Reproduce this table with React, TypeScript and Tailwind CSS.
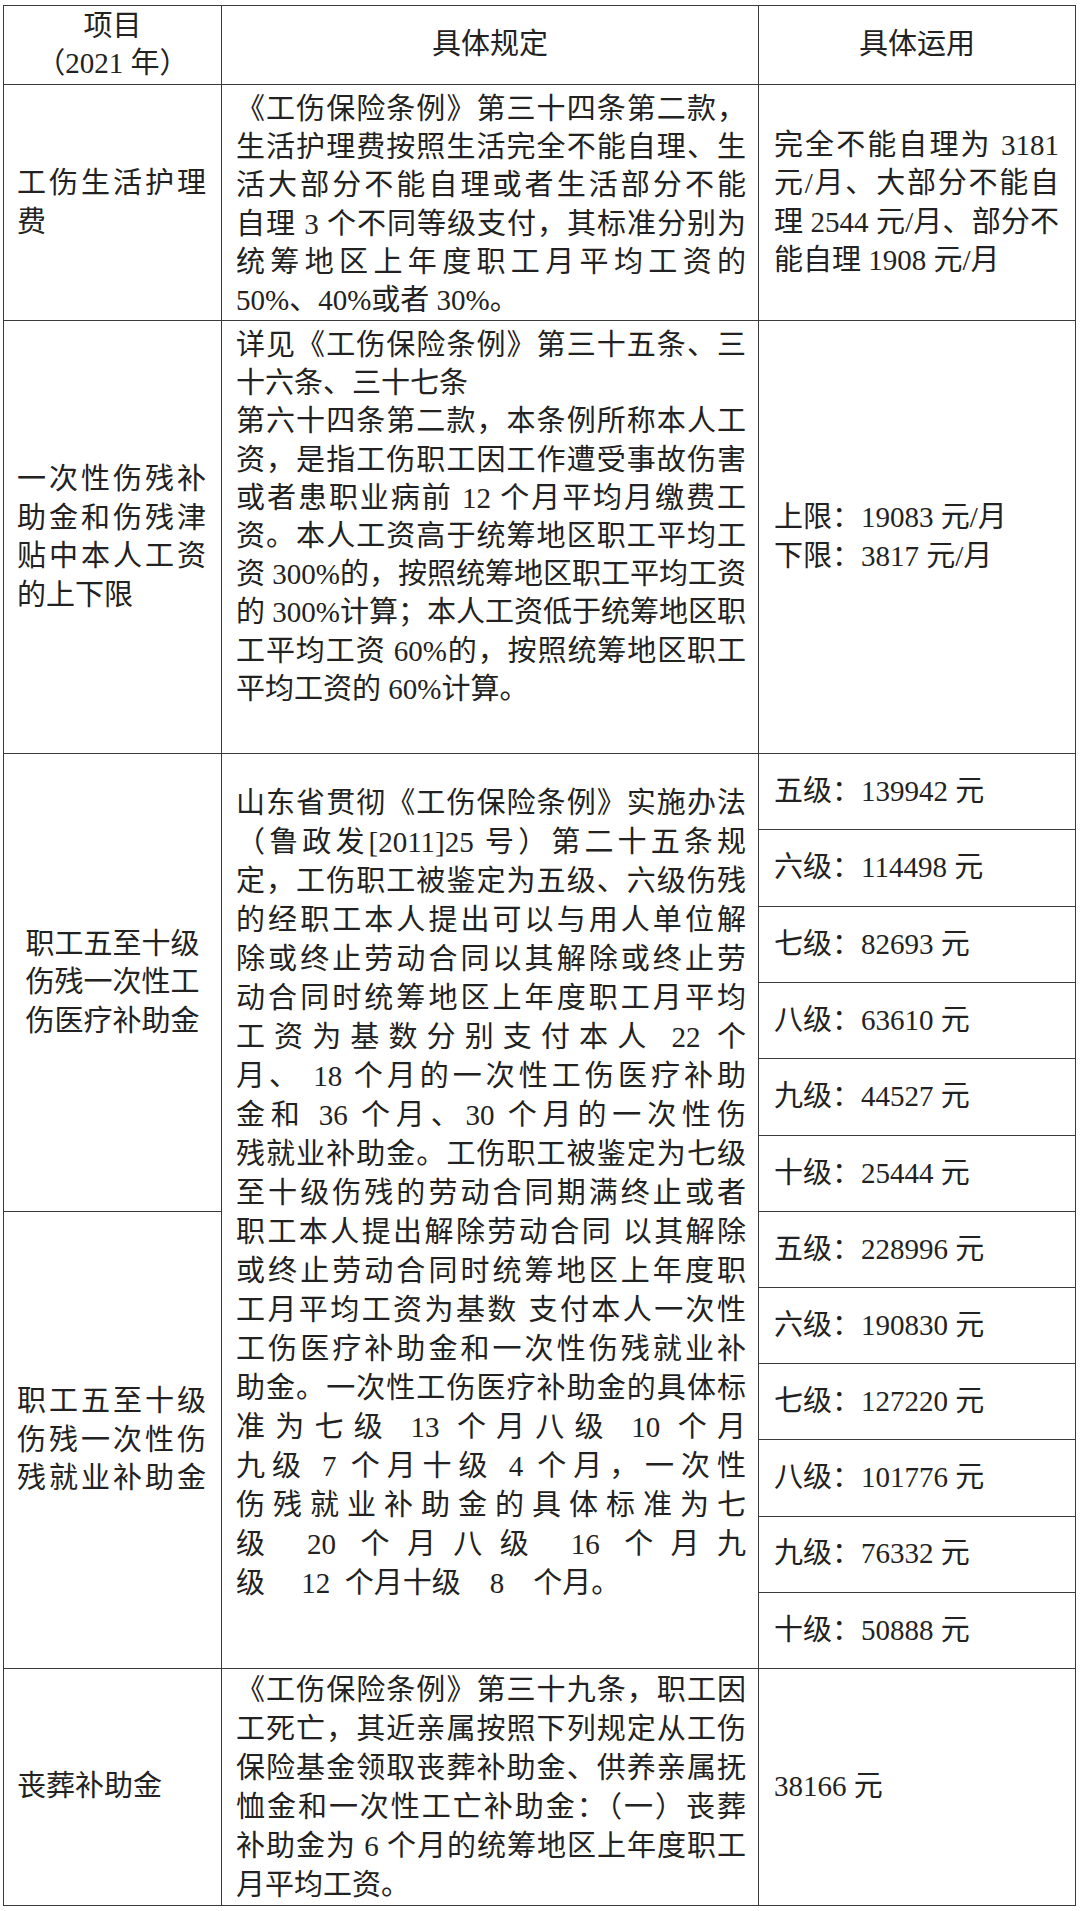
import React from "react"

/* DATA */

const sub1=["五级：139942 元","六级：114498 元","七级：82693 元","八级：63610 元","九级：44527 元","十级：25444 元"]
const sub2=["五级：228996 元","六级：190830 元","七级：127220 元","八级：101776 元","九级：76332 元","十级：50888 元"]

const rule1=[[
"《工伤保险条例》第三十四条第二款，",
"生活护理费按照生活完全不能自理、生",
"活大部分不能自理或者生活部分不能",
"自理 3 个不同等级支付，其标准分别为",
"统筹地区上年度职工月平均工资的",
"50%、40%或者 30%。"
]]

const rule2=[[
"详见《工伤保险条例》第三十五条、三",
"十六条、三十七条"
],[
"第六十四条第二款，本条例所称本人工",
"资，是指工伤职工因工作遭受事故伤害",
"或者患职业病前 12 个月平均月缴费工",
"资。本人工资高于统筹地区职工平均工",
"资 300%的，按照统筹地区职工平均工资",
"的 300%计算；本人工资低于统筹地区职",
"工平均工资 60%的，按照统筹地区职工",
"平均工资的 60%计算。"
]]

const rule3=[[
"山东省贯彻《工伤保险条例》实施办法",
"（鲁政发[2011]25 号）第二十五条规",
"定，工伤职工被鉴定为五级、六级伤残",
"的经职工本人提出可以与用人单位解",
"除或终止劳动合同以其解除或终止劳",
"动合同时统筹地区上年度职工月平均",
"工资为基数分别支付本人 22 个",
"月、 18 个月的一次性工伤医疗补助",
"金和 36 个月、30 个月的一次性伤",
"残就业补助金。工伤职工被鉴定为七级",
"至十级伤残的劳动合同期满终止或者",
"职工本人提出解除劳动合同 以其解除",
"或终止劳动合同时统筹地区上年度职",
"工月平均工资为基数 支付本人一次性",
"工伤医疗补助金和一次性伤残就业补",
"助金。一次性工伤医疗补助金的具体标",
"准为七级 13 个月八级 10 个月",
"九级 7 个月十级 4 个月，一次性",
"伤残就业补助金的具体标准为七",
"级 20 个月八级 16 个月九",
"级\u00a0\u00a0\u00a0\u00a0\u00a012\u00a0\u00a0个月十级\u00a0\u00a0\u00a0\u00a08\u00a0\u00a0\u00a0\u00a0个月。"
]]

const rule5=[[
"《工伤保险条例》第三十九条，职工因",
"工死亡，其近亲属按照下列规定从工伤",
"保险基金领取丧葬补助金、供养亲属抚",
"恤金和一次性工亡补助金：（一）丧葬",
"补助金为 6 个月的统筹地区上年度职工",
"月平均工资。"
]]

/* COMPONENT */

export default function App(){

const cell="border-r border-b border-[#3a3a3a]"

return(
<div className="min-h-[1911px] bg-white pt-[5px] pl-[3px] text-[#222] text-[29px] font-['Liberation_Serif','Noto_Sans_CJK_SC',serif]">

<div className="w-[1073px] border-l border-t border-[#3a3a3a] grid grid-cols-[218px_537px_317px] grid-rows-[79px_236px_433px_repeat(6,76.33px)_repeat(6,76.17px)_237px]">

{/* HEADER */}

<div className={`${cell} flex flex-col items-center justify-center leading-[37px]`}>
<div>项目</div>
<div>（2021 年）</div>
</div>
<div className={`${cell} flex items-center justify-center`}>具体规定</div>
<div className={`${cell} flex items-center justify-center`}>具体运用</div>

{/* ROW1 */}

<div className={`${cell} flex flex-col justify-center pl-[13px] pr-[15px] leading-[38.5px]`}>
<Lines paras={[["工伤生活护理","费"]]}/>
</div>
<div className={`${cell} pt-[5px] pl-[14px] pr-[12px] leading-[38.2px]`}>
<Lines paras={rule1}/>
</div>
<div className={`${cell} flex flex-col justify-center pl-[15px] pr-[16px] leading-[38.5px]`}>
<Lines paras={[["完全不能自理为 3181","元/月、大部分不能自","理 2544 元/月、部分不","能自理 1908 元/月"]]}/>
</div>

{/* ROW2 */}

<div className={`${cell} flex flex-col justify-center pl-[13px] pr-[15px] leading-[38.5px]`}>
<Lines paras={[["一次性伤残补","助金和伤残津","贴中本人工资","的上下限"]]}/>
</div>
<div className={`${cell} pt-[5px] pl-[14px] pr-[12px] leading-[38.2px]`}>
<Lines paras={rule2}/>
</div>
<div className={`${cell} flex flex-col justify-center pl-[15px] leading-[39px]`}>
<div>上限：19083 元/月</div>
<div>下限：3817 元/月</div>
</div>

{/* ROW3 */}

<div className={`${cell} row-span-6 flex flex-col items-center justify-center leading-[38.5px]`}>
<div>职工五至十级</div>
<div>伤残一次性工</div>
<div>伤医疗补助金</div>
</div>
<div className={`${cell} row-span-12 pt-[30px] pl-[14px] pr-[12px] leading-[39px]`}>
<Lines paras={rule3}/>
</div>
{sub1.map((t)=>(
<div key={t} className={`${cell} flex items-center pl-[15px]`}>{t}</div>
))}

{/* ROW4 */}

<div className={`${cell} row-span-6 flex flex-col justify-center pl-[13px] pr-[15px] leading-[38.5px]`}>
<Lines paras={[["职工五至十级","伤残一次性伤","残就业补助金"]]} lastJ/>
</div>
{sub2.map((t)=>(
<div key={t} className={`${cell} flex items-center pl-[15px]`}>{t}</div>
))}

{/* ROW5 */}

<div className={`${cell} flex items-center pl-[13px]`}>丧葬补助金</div>
<div className={`${cell} pt-[2px] pl-[14px] pr-[12px] leading-[39px]`}>
<Lines paras={rule5}/>
</div>
<div className={`${cell} flex items-center pl-[15px]`}>38166 元</div>

</div>
</div>
)
}

/* REUSABLE */

function Lines({paras,lastJ=false}:{paras:string[][],lastJ?:boolean}){
return(
<>
{paras.map((p,pi)=>p.map((l,li)=>{
const j=li<p.length-1||lastJ
return(
<div key={pi+"-"+li}
className={j?"whitespace-nowrap text-justify [text-align-last:justify]":"whitespace-nowrap"}>
{l}
</div>
)
}))}
</>
)
}
